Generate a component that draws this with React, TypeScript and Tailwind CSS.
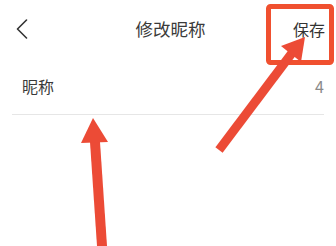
import React from "react";

export default function App() {
  return (
    <div
      className="relative w-[336px] h-[246px] bg-white overflow-hidden"
      style={{ fontFamily: '"Noto Sans CJK SC", "Noto Sans", sans-serif' }}
    >
      <div className="flex items-center h-[58px] pl-4 pr-[11px]">
        <div className="w-[70px] flex items-center">
          <svg width="12" height="20" viewBox="0 0 12 20" fill="none">
            <path d="M10.5 1 L1.5 10 L10.5 19" stroke="#333333" strokeWidth="1.6" strokeLinecap="round" strokeLinejoin="round" />
          </svg>
        </div>
        <div className="flex-1 text-center text-[17.5px] text-[#3a3a3a] leading-none">修改昵称</div>
        <div className="w-[70px] text-right text-[16px] text-[#333333] leading-none">保存</div>
      </div>
      <div className="flex items-center justify-between h-[56px] pl-[22px] pr-3">
        <span className="text-[16px] text-[#3a3a3a] leading-none">昵称</span>
        <span className="text-[16px] text-[#8a8a8a] leading-none">4</span>
      </div>
      <div className="mx-3 h-px bg-[#e6e6e6]" />

      <svg className="absolute inset-0" width="336" height="246" viewBox="0 0 336 246">
        <rect x="268.5" y="6.5" width="63" height="56" rx="2" fill="none" stroke="#f0502f" strokeWidth="5" />
        <polygon points="90,142 100,142 107,246 97,246" fill="#ec4b36" />
        <polygon points="93,118 81,143 108,142" fill="#ec4b36" />
        <line x1="219" y1="150" x2="292" y2="53" stroke="#ec4b36" strokeWidth="9" strokeLinecap="butt" />
        <polygon points="305,37 281,46 301,62" fill="#ec4b36" />
      </svg>
    </div>
  );
}
